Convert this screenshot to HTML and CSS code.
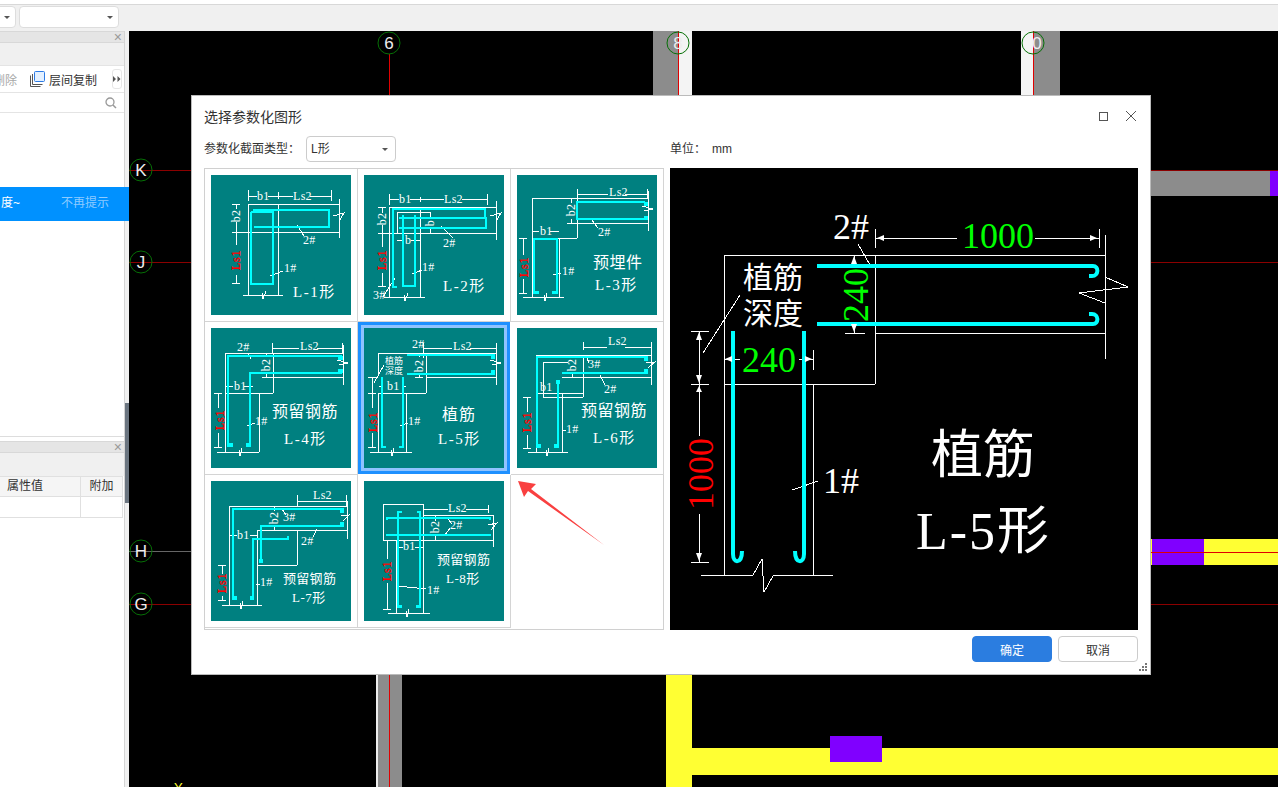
FILE: index.html
```html
<!DOCTYPE html>
<html lang="zh-CN">

<head>
  <meta charset="UTF-8" />
  <title>选择参数化图形</title>
  <link rel="stylesheet" href="styles.css">
</head>

<body>
  <div class="topbar">
    <div class="top-select first"><span class="caret"></span></div>
    <div class="top-select second"><span class="caret"></span></div>
  </div>

  <div class="main">
    <aside class="side">
      <div class="panel-head"><span class="close">×</span></div>
      <div class="panel-sub first-sub"></div>
      <div class="tools">
        <span class="tool-off">删除</span>
        <svg class="copy-icon" width="16" height="16" viewBox="0 0 16 16">
          <path d="M1.5 4.5v11h10M3.5 3v10.500h10" fill="none" stroke="#555" />
          <rect x="5.500" y="0.500" width="10" height="10" rx="1" fill="#e3f0ff" stroke="#2c7be5" />
        </svg>
        <span class="tool-on">层间复制</span>
        <span class="more">
          <svg width="8" height="6" viewBox="0 0 8 6"><path d="M0 0l3 3l-3 3zM4.500 0l3 3l-3 3z" fill="#555" /></svg>
        </span>
      </div>
      <div class="search">
        <svg width="12" height="12" viewBox="0 0 12 12">
          <circle cx="5" cy="5" r="4" fill="none" stroke="#999" stroke-width="1.300" />
          <path d="M8 8l3 3" stroke="#999" stroke-width="1.500" />
        </svg>
      </div>
      <div class="side-fill"></div>
      <div class="panel-head"><span class="close">×</span></div>
      <div class="panel-sub second-sub"></div>
      <div class="prop-table">
        <div class="prop-row prop-title"><span class="prop-name">属性值</span><span class="prop-add">附加</span></div>
        <div class="prop-row"><span class="prop-name"></span><span class="prop-add"></span></div>
      </div>
    </aside>

    <div class="splitter"><div class="splitter-grip"></div></div>

    <svg class="canvas" width="1149" height="756" viewBox="129 31 1149 756">
      <rect x="378" y="660" width="24" height="127" fill="#8c8c8c" />
      <rect x="376" y="660" width="2" height="127" fill="#eee" />
      <rect x="653" y="31" width="25" height="70" fill="#8c8c8c" />
      <rect x="678" y="31" width="14" height="70" fill="#f4f4f4" />
      <rect x="1021" y="31" width="12" height="70" fill="#f4f4f4" />
      <rect x="1033" y="31" width="27" height="70" fill="#8c8c8c" />
      <rect x="666" y="670" width="26" height="117" fill="#ffff33" />
      <rect x="692" y="748" width="586" height="27" fill="#ffff33" />
      <rect x="830" y="736" width="52" height="26" fill="#8000ff" />
      <rect x="1140" y="170" width="138" height="26" fill="#8c8c8c" />
      <rect x="1270" y="170" width="8" height="26" fill="#8000ff" />
      <rect x="1140" y="539" width="138" height="26" fill="#ffff33" />
      <rect x="1152" y="539" width="52" height="26" fill="#8000ff" />
      <path class="axis-red" d="M389.500 54V787M678.500 31V100M1033.500 31V100M1140 552.500H1278" />
      <path class="axis-dark" d="M129 170.500H200M1140 170.500H1278M129 262.500H200M1140 262.500H1278M129 604.500H200M1140 604.500H1278" />
      <path class="axis-grey" d="M129 551.500H200" />
      <circle class="axis-ring" cx="389" cy="43" r="11" />
      <circle class="axis-ring" cx="678" cy="43" r="11" />
      <circle class="axis-ring" cx="1033" cy="43" r="11" />
      <circle class="axis-ring" cx="141" cy="170" r="11" />
      <circle class="axis-ring" cx="141" cy="262" r="11" />
      <circle class="axis-ring" cx="141" cy="551" r="11" />
      <circle class="axis-ring" cx="141" cy="604" r="11" />
      <text class="axis-text" x="389" y="49">6</text>
      <text class="axis-text" x="678" y="49">8</text>
      <text class="axis-text" x="1037" y="49">0</text>
      <text class="axis-text" x="141" y="176">K</text>
      <text class="axis-text" x="141" y="268">J</text>
      <text class="axis-text" x="141" y="557">H</text>
      <text class="axis-text" x="141" y="610">G</text>
      <text class="axis-y" x="174" y="792">Y</text>
    </svg>
  </div>

  <div class="banner"><span class="banner-text">度~</span><span class="banner-link">不再提示</span></div>

  <div class="dialog">
    <div class="dialog-title">
      <span>选择参数化图形</span>
      <span class="win-btns">
        <svg width="11" height="11" viewBox="0 0 11 11"><rect x="1.500" y="1.500" width="8" height="8" fill="none" stroke="#555" /></svg>
        <svg width="12" height="12" viewBox="0 0 12 12"><path d="M1 1l10 10M11 1L1 11" stroke="#555" /></svg>
      </span>
    </div>

    <div class="dialog-body">
      <div class="left-col">
        <div class="type-row">
          <span class="type-label">参数化截面类型：</span>
          <div class="type-select">L形<span class="caret"></span></div>
        </div>
        <div class="shape-wrap">
          <div class="shape-grid">
            <div class="cell">
              <svg class="thumb" viewBox="0 0 140 140">
                <path class="ln" d="M37 15V26M67 17V24M120 15V26M37 21H46M57 21H82M99 21H120M37 29H128M37 29V120M67 29V120M22 57H128M128 24V63M32 120H72M25 29V34M25 47V70M25 100V108M21 29H29M21 57H29M21 108H29M122 41L133 38L128 46M51 118L52 124L55 116M86 50L93 61M59 101L72 96" />
                <path class="rb" d="M40 37V109H62V37H40M42 35H118V52H43" />
                <text class="t" x="46" y="25">b1</text><text class="t" x="82" y="25">Ls2</text>
                <text class="t" transform="rotate(-90 29 41)" x="29" y="41" text-anchor="middle">b2</text>
                <text class="t red" transform="rotate(-90 29 85)" x="29" y="85" text-anchor="middle">Ls1</text>
                <text class="t" x="92" y="69">2#</text><text class="t" x="73" y="97">1#</text>
                <text class="t big" x="82" y="122">L-1形</text>
              </svg>
            </div>
            <div class="cell">
              <svg class="thumb" viewBox="0 0 140 140">
                <path class="ln" d="M25 19V30M56 22V27M123 19V30M25 24H35M46 24H80M98 24H123M25 32H132M25 32V122M56 32V122M20 122H61M14 58H132M132 26V65M18 32V38M18 50V72M18 98V111M14 32H22M14 58H22M14 111H22M33 37V58M33 37H66M66 37V44M66 52V58M33 65H40M47 65H56M126 41L137 38L132 46M40 120L41 126L44 118M77 51L89 63M48 99L58 95M31 103L19 122" />
                <path class="rb" d="M33 112H29V34H121V42M39 40V111H51V40M35 43H122V53H35" />
                <text class="t" x="35" y="28">b1</text><text class="t" x="80" y="28">Ls2</text>
                <text class="t" transform="rotate(-90 22 44)" x="22" y="44" text-anchor="middle">b2</text>
                <text class="t red" transform="rotate(-90 22 85)" x="22" y="85" text-anchor="middle">Ls1</text>
                <text class="t" transform="rotate(-90 70 48)" x="70" y="48" text-anchor="middle">b</text>
                <text class="t" x="41" y="69">b</text>
                <text class="t" x="79" y="72">2#</text><text class="t" x="58" y="96">1#</text><text class="t" x="9" y="124">3#</text>
                <text class="t big" x="79" y="116">L-2形</text>
              </svg>
            </div>
            <div class="cell">
              <svg class="thumb" viewBox="0 0 140 140">
                <path class="ln" d="M60 14V24M130 14V24M60 19H91M108 19H130M15 23H131M15 23V122M15 63H60M60 23V63M42 63V122M6 122H47M51 48H131M131 16V56M15 56H22M33 56H42M54 23V28M54 44V48M50 23H58M50 48H58M6 63V80M6 104V118M2 63H10M2 118H10M125 31L136 34L127 36M27 120L28 126L30 118M74 44L81 53M36 100L44 98" />
                <path class="rb" d="M128 27H60V44H130M17 119V64H40V119" />
                <rect class="sq" x="127" y="27" width="4" height="4" /><rect class="sq" x="127" y="41" width="4" height="4" />
                <rect class="sq" x="17" y="116" width="5" height="3" /><rect class="sq" x="35" y="116" width="5" height="3" />
                <text class="t" x="23" y="60">b1</text><text class="t" x="92" y="21">Ls2</text>
                <text class="t" transform="rotate(-90 58 35)" x="58" y="35" text-anchor="middle">b2</text>
                <text class="t red" transform="rotate(-90 11 92)" x="11" y="92" text-anchor="middle">Ls1</text>
                <text class="t" x="81" y="61">2#</text><text class="t" x="45" y="100">1#</text>
                <text class="t cn" x="76" y="93">预埋件</text>
                <text class="t big" x="78" y="115">L-3形</text>
              </svg>
            </div>
            <div class="cell">
              <svg class="thumb" viewBox="0 0 140 140">
                <path class="ln" d="M61 15V25M131 15V25M61 20H88M106 20H131M14 25H132M14 25V124M14 65H62M62 25V65M48 65V124M6 124H48M52 49H132M132 17V57M14 58H22M33 58H42M55 25V29M55 45V49M51 25H59M51 49H59M7 65V80M7 105V119M3 65H11M3 119H11M126 32L137 35L128 37M28 122L29 128L31 120M37 25L40 31M36 98L44 95" />
                <path class="rb" d="M131 28H17V119M131 45H39V119" />
                <rect class="sq" x="127" y="28" width="5" height="4" /><rect class="sq" x="127" y="41" width="5" height="4" />
                <rect class="sq" x="17" y="115" width="5" height="4" /><rect class="sq" x="35" y="115" width="5" height="4" />
                <text class="t" x="23" y="62">b1</text><text class="t" x="89" y="22">Ls2</text><text class="t" x="26" y="23">2#</text>
                <text class="t" transform="rotate(-90 59 37)" x="59" y="37" text-anchor="middle">b2</text>
                <text class="t red" transform="rotate(-90 13 92)" x="13" y="92" text-anchor="middle">Ls1</text>
                <text class="t" x="44" y="97">1#</text>
                <text class="t cn" x="61" y="89">预留钢筋</text>
                <text class="t big" x="73" y="116">L-4形</text>
              </svg>
            </div>
            <div class="cell selected">
              <svg class="thumb" viewBox="0 0 140 140">
                <path class="ln" d="M59 15V25M132 15V25M59 20H88M106 20H132M14 25H132M14 25V47M14 65V124M14 65H62M62 25V65M42 65V124M6 124H48M62 49H132M132 17V57M15 58H18M39 58H42M55 25V29M55 45V49M51 25H59M51 49H59M8 49V80M8 105V119M4 49H12M4 65H12M4 119H12M126 32L137 35L128 37M27 122L28 128L30 120M57 25L60 30M36 98L44 95M20 37L10 55" />
                <path class="rb" d="M43 27H131M43 46H131M18 49V119H22M39 49V119H35" />
                <rect class="sq" x="127" y="27" width="4" height="4" /><rect class="sq" x="127" y="42" width="4" height="4" />
                <text class="t" x="23" y="62">b1</text><text class="t" x="89" y="22">Ls2</text><text class="t" x="48" y="20">2#</text>
                <text class="t" transform="rotate(-90 59 38)" x="59" y="38" text-anchor="middle">b2</text>
                <text class="t red" transform="rotate(-90 13 94)" x="13" y="94" text-anchor="middle">Ls1</text>
                <text class="t tiny" x="21" y="36">植筋</text><text class="t tiny" x="21" y="46">深度</text>
                <text class="t" x="44" y="97">1#</text>
                <text class="t cn2" x="78" y="92">植筋</text>
                <text class="t big" x="74" y="116">L-5形</text>
              </svg>
            </div>
            <div class="cell">
              <svg class="thumb" viewBox="0 0 140 140">
                <path class="ln" d="M66 14V22M134 14V22M66 19H90M108 19H134M19 27H135M19 27V124M19 65H66M66 27V69M26 69H66M26 34V69M26 34H51M45 65V124M11 124H51M45 49H135M134 16V57M55 27V30M55 44V49M10 69V84M10 107V120M6 69H14M6 120H14M129 35L138 34L131 40M29 122L30 128L32 120M70 30L72 35M83 47L88 57M45 103L49 102" />
                <path class="rb" d="M131 29H20V120M45 45H131M41 53V120" />
                <rect class="sq" x="127" y="29" width="4" height="4" /><rect class="sq" x="127" y="41" width="4" height="4" />
                <rect class="sq" x="20" y="116" width="4" height="4" /><rect class="sq" x="37" y="116" width="4" height="4" /><rect class="sq" x="39" y="52" width="4" height="4" />
                <text class="t" x="23" y="63">b1</text><text class="t" x="91" y="17">Ls2</text>
                <text class="t" transform="rotate(-90 59 37)" x="59" y="37" text-anchor="middle">b2</text>
                <text class="t red" transform="rotate(-90 14 94)" x="14" y="94" text-anchor="middle">Ls1</text>
                <text class="t" x="71" y="40">3#</text><text class="t" x="87" y="65">2#</text><text class="t" x="49" y="105">1#</text>
                <text class="t cn" x="64" y="88">预留钢筋</text>
                <text class="t big" x="76" y="115">L-6形</text>
              </svg>
            </div>
            <div class="cell">
              <svg class="thumb" viewBox="0 0 140 140">
                <path class="ln" d="M86 14V25M135 14V25M86 20H135M18 25H136M18 25V124M11 124H51M46 49V124M46 49H136M86 49V84M46 84H86M136 20V58M18 54H26M39 54H46M63 25V30M63 44V49M11 84V93M11 115V119M7 84H15M7 119H15M130 35L138 34L132 40M29 122L30 128L32 120M71 28L75 34M106 48L102 56M45 103L49 103" />
                <path class="rb" d="M133 28H22V119M133 45H50V81M77 55V58H42V119" />
                <rect class="sq" x="129" y="28" width="4" height="4" /><rect class="sq" x="129" y="41" width="4" height="4" />
                <rect class="sq" x="22" y="115" width="4" height="4" /><rect class="sq" x="39" y="115" width="4" height="4" /><rect class="sq" x="48" y="78" width="4" height="4" />
                <text class="t" x="26" y="58">b1</text><text class="t" x="102" y="18">Ls2</text>
                <text class="t" transform="rotate(-90 67 37)" x="67" y="37" text-anchor="middle">b2</text>
                <text class="t red" transform="rotate(-90 15 102)" x="15" y="102" text-anchor="middle">Ls1</text>
                <text class="t" x="72" y="40">3#</text><text class="t" x="90" y="64">2#</text><text class="t" x="49" y="105">1#</text>
                <text class="t cn3" x="72" y="102">预留钢筋</text>
                <text class="t big2" x="81" y="121">L-7形</text>
              </svg>
            </div>
            <div class="cell">
              <svg class="thumb" viewBox="0 0 140 140">
                <path class="ln" d="M19 23H59V59H19V23M59 34H129M59 59H129M129 34V66M59 28H84M102 28H124M124 24V32M32 59V132M59 59V132M24 132H66M32 66H39M51 66H59M71 34V40M71 54V59M23 59V78M23 102V128M19 59H27M19 128H27M124 44L133 42L127 49M42 130L43 136L45 128M84 38L88 43M81 54L86 47M34 105L62 108" />
                <path class="rb" d="M23 39V37H126V39M23 55V54H126V55M34 127V31H38M56 127V31H53" />
                <rect class="sq" x="34" y="124" width="4" height="3" /><rect class="sq" x="52" y="124" width="4" height="3" />
                <text class="t" x="39" y="69">b1</text><text class="t" x="84" y="31">Ls2</text>
                <text class="t" transform="rotate(-90 75 46)" x="75" y="46" text-anchor="middle">b2</text>
                <text class="t red" transform="rotate(-90 27 90)" x="27" y="90" text-anchor="middle">Ls1</text>
                <text class="t" x="86" y="48">2#</text><text class="t" x="63" y="113">1#</text>
                <text class="t cn3" x="73" y="83">预留钢筋</text>
                <text class="t big2" x="82" y="102">L-8形</text>
              </svg>
            </div>
            <div class="cell empty"></div>
          </div>
        </div>
      </div>

      <div class="right-col">
        <div class="unit-row"><span>单位：</span><span class="unit-value">mm</span></div>
        <svg class="preview" width="468" height="462" viewBox="0 0 468 462">
          <path class="ln" d="M54 87H435M54 87V407M54 216H205M205 87V216M205 165H435M435 67V191M435 109L458 119L409 125L435 135M143 182V202M143 216V407M31 407H83M103 407H163M83 407L92 391L94 424L103 408M205 61V80M429 61V80M205 70H287M365 70H429M54 191H70M129 191H143M184 88V97M184 155V165M175 165H195M21 163H39M21 216H39M21 394H39M29 163V216M29 216V268M29 346V394M188 76L200 97M70 127L33 185M122 322L148 313" />
          <path class="rb-big" d="M147 98H423C429 98 429 108 422 108H419M147 156H423C429 156 429 146 422 146H419M63 163V386C63 396 72 396 72 383M134 163V386C134 396 125 396 125 383" />
          <polygon class="ar" points="207,70 214,67 214,73" /><polygon class="ar" points="427,70 420,67 420,73" />
          <polygon class="ar" points="55,191 62,188 62,194" /><polygon class="ar" points="142,191 135,188 135,194" />
          <polygon class="ar" points="184,88 181,96 187,96" /><polygon class="ar" points="184,164 181,156 187,156" />
          <polygon class="ar" points="29,164 26,172 32,172" /><polygon class="ar" points="29,215 26,207 32,207" />
          <polygon class="ar" points="29,218 26,224 32,224" /><polygon class="ar" points="29,393 26,385 32,385" />
          <text class="p-num green" x="292" y="80">1000</text>
          <text class="p-num green" x="72" y="204">240</text>
          <text class="p-num green" transform="rotate(-90 198 127)" x="198" y="127" text-anchor="middle">240</text>
          <text class="p-num red-num" transform="rotate(-90 43 306)" x="43" y="306" text-anchor="middle">1000</text>
          <text class="p-num" x="163" y="71">2#</text>
          <text class="p-num" x="153" y="325">1#</text>
          <text class="p-cn" x="73" y="120">植筋</text>
          <text class="p-cn" x="73" y="156">深度</text>
          <text class="p-big" x="261" y="305">植筋</text>
          <text class="p-big wide" x="246" y="381">L-5形</text>
        </svg>
      </div>
    </div>

    <div class="dialog-foot">
      <button class="btn primary">确定</button>
      <button class="btn">取消</button>
    </div>

    <svg class="grip" width="8" height="8" viewBox="0 0 8 8">
      <path d="M6 0h2v2H6zM3 3h2v2H3zM6 3h2v2H6zM0 6h2v2H0zM3 6h2v2H3zM6 6h2v2H6z" fill="#777" />
    </svg>
  </div>

  <svg class="arrow" width="100" height="80" viewBox="510 475 100 80">
    <polygon points="518,481 536,484 531,489 604,545 528,491 524,497" fill="#f94040" />
  </svg>
</body>

</html>
```

FILE: styles.css
```css
* {
  box-sizing: border-box;
}

html,
body {
  margin: 0;
  height: 787px;
  overflow: hidden;
}

body {
  position: relative;
  width: 1278px;
  background: #f0f0f0;
  color: #333;
  font-family: "Liberation Sans", "Noto Sans CJK SC", sans-serif;
  font-size: 12px;
}

/* top toolbar */
.topbar {
  display: flex;
  gap: 3px;
  height: 31px;
  margin-left: -10px;
  padding-top: 2px;
  background: #f0f0f0;
  border-top: 4px solid #fff;
  box-shadow: inset 0 1px 0 #d8d8d8;
}

.top-select {
  position: relative;
  height: 22px;
  background: #fff;
  border: 1px solid #ddd;
  border-radius: 4px;
}

.top-select.first {
  width: 26px;
}

.top-select.second {
  width: 100px;
}

.caret {
  position: absolute;
  right: 5px;
  top: 9px;
  border-left: 3px solid transparent;
  border-right: 3px solid transparent;
  border-top: 3px solid #555;
}

.main {
  display: flex;
  height: 756px;
}

/* left panels */
.side {
  display: flex;
  flex-direction: column;
  width: 125px;
  background: #fff;
  border-right: 1px solid #d4d4d4;
}

.panel-head {
  position: relative;
  height: 12px;
  background: #e5e5e5;
  border-top: 1px solid #d8d8d8;
  border-bottom: 1px solid #d8d8d8;
  flex: none;
}

.close {
  position: absolute;
  right: 2px;
  top: -3px;
  color: #999;
  font-size: 14px;
  line-height: 16px;
}

.panel-sub {
  background: #f0f0f0;
  flex: none;
}

.first-sub {
  height: 22px;
}

.second-sub {
  height: 23px;
}

.tools {
  display: flex;
  align-items: center;
  height: 28px;
  background: #fff;
  border-top: 1px solid #e4e4e4;
  border-bottom: 1px solid #e4e4e4;
  padding-right: 2px;
  flex: none;
}

.tool-off {
  margin-left: -7px;
  color: #a8a8a8;
}

.copy-icon {
  margin-left: 12px;
}

.tool-on {
  margin-left: 4px;
  white-space: nowrap;
}

.more {
  display: flex;
  align-items: center;
  justify-content: center;
  margin-left: auto;
  width: 10px;
  height: 20px;
  border: 1px solid #e6e6e6;
  border-radius: 3px;
}

.search {
  display: flex;
  align-items: center;
  justify-content: flex-end;
  height: 20px;
  padding-right: 7px;
  border-bottom: 1px solid #e4e4e4;
  flex: none;
}

.side-fill {
  flex: 1;
  background: linear-gradient(#fff 323px, #ddd 323px, #ddd 324px, #fff 324px);
}

.prop-table {
  height: 311px;
  background: #fff;
  flex: none;
}

.prop-row {
  display: flex;
  width: 123px;
  height: 21px;
  border-bottom: 1px solid #e0e0e0;
  border-right: 1px solid #e0e0e0;
}

.prop-title {
  background: #f5f5f5;
  border-top: 1px solid #e0e0e0;
  line-height: 19px;
}

.prop-name {
  width: 81px;
  padding-left: 7px;
  border-right: 1px solid #e0e0e0;
}

.prop-add {
  flex: 1;
  text-align: center;
}

.splitter {
  position: relative;
  width: 4px;
  background: #f0f0f0;
}

.splitter-grip {
  position: absolute;
  top: 372px;
  left: 0;
  width: 4px;
  height: 100px;
  background: #6b7580;
}

/* drawing area */
.canvas {
  display: block;
  background: #000;
}

.axis-red {
  stroke: #e00000;
  fill: none;
}

.axis-dark {
  stroke: #8b0000;
  fill: none;
}

.axis-grey {
  stroke: #666;
  fill: none;
}

.axis-ring {
  fill: none;
  stroke: #067006;
}

.axis-text {
  fill: #eee;
  font-size: 17px;
  text-anchor: middle;
}

.axis-y {
  fill: #ffff33;
  font-size: 13px;
}

.banner {
  position: absolute;
  left: 0;
  top: 187px;
  display: flex;
  width: 129px;
  height: 34px;
  background: #0091ff;
  line-height: 33px;
}

.banner-text {
  padding-left: 1px;
  color: #fff;
}

.banner-link {
  margin-left: 41px;
  color: #8ecbff;
}

/* dialog */
.dialog {
  position: absolute;
  left: 192px;
  top: 96px;
  width: 958px;
  height: 578px;
  background: #fff;
  box-shadow: 0 0 0 1px #bbb;
}

.dialog-title {
  display: flex;
  justify-content: space-between;
  align-items: center;
  height: 40px;
  padding: 0 13px 0 12px;
  font-size: 14px;
}

.win-btns {
  display: flex;
  align-items: center;
  gap: 16px;
}

.dialog-body {
  display: flex;
  gap: 6px;
  padding-left: 12px;
  padding-right: 12px;
}

.left-col {
  width: 460px;
}

.type-row {
  display: flex;
  align-items: flex-start;
  height: 32px;
  line-height: 26px;
}

.type-label {
  width: 102px;
}

.type-select {
  position: relative;
  width: 90px;
  height: 26px;
  padding-left: 4px;
  border: 1px solid #ccc;
  border-radius: 4px;
  line-height: 24px;
}

.type-select .caret {
  right: 7px;
  top: 11px;
}

.shape-wrap {
  width: 460px;
  height: 462px;
  border: 1px solid #d0d0d0;
  padding-right: 1px;
  padding-bottom: 2px;
}

.shape-grid {
  display: grid;
  grid-template-columns: repeat(3, 153px);
  grid-template-rows: repeat(3, 153px);
}

.cell {
  padding: 6px;
  border-right: 1px solid #d4d4d4;
  border-bottom: 1px solid #d4d4d4;
}

.cell.selected {
  width: 152px;
  height: 152px;
  border: 0;
  box-shadow: inset 0 0 0 3px #1e90ff, inset 0 0 0 6px #8fc3ff;
}

.cell.empty {
  border-right: 0;
  border-bottom: 0;
}

.thumb {
  display: block;
  width: 140px;
  height: 140px;
  background: #008080;
}

.ln {
  fill: none;
  stroke: #fff;
  stroke-width: 1;
  shape-rendering: crispEdges;
}

.rb {
  fill: none;
  stroke: #0ff;
  stroke-width: 2.500;
  shape-rendering: crispEdges;
}

.rb-big {
  fill: none;
  stroke: #0ff;
  stroke-width: 4;
}

.sq {
  fill: #0ff;
}

.ar {
  fill: #fff;
}

.t {
  fill: #fff;
  font-family: "Liberation Serif", "Noto Sans CJK SC", serif;
  font-size: 12px;
  letter-spacing: 0.300px;
}

.t.red {
  fill: #f00;
  stroke: #f00;
  stroke-width: 0.400;
  letter-spacing: 0.800px;
}

.t.big {
  font-size: 15px;
  letter-spacing: 1.500px;
}

.t.big2 {
  font-size: 13px;
  letter-spacing: 0.500px;
}

.t.cn {
  font-size: 16px;
  letter-spacing: 0.500px;
}

.t.cn2 {
  font-size: 16px;
  letter-spacing: 1px;
}

.t.cn3 {
  font-size: 13px;
}

.t.tiny {
  font-size: 9px;
  letter-spacing: 0;
}

.right-col {
  width: 468px;
}

.unit-row {
  display: flex;
  align-items: flex-start;
  height: 32px;
  line-height: 26px;
}

.unit-value {
  margin-left: 6px;
}

.preview {
  display: block;
  background: #000;
}

.p-num {
  fill: #fff;
  font-family: "Liberation Serif", serif;
  font-size: 36px;
}

.p-num.green {
  fill: #0f0;
}

.p-num.red-num {
  fill: #f00;
}

.p-cn {
  fill: #fff;
  font-family: "Noto Sans CJK SC", sans-serif;
  font-size: 30px;
}

.p-big {
  fill: #fff;
  font-family: "Liberation Serif", "Noto Sans CJK SC", serif;
  font-size: 52px;
}

.p-big.wide {
  letter-spacing: 2px;
}

.dialog-foot {
  display: flex;
  justify-content: flex-end;
  gap: 6px;
  margin-top: 6px;
  padding-right: 12px;
}

.btn {
  width: 80px;
  height: 26px;
  padding: 0;
  background: #fff;
  border: 1px solid #ccc;
  border-radius: 4px;
  color: #333;
  font: inherit;
}

.btn.primary {
  background: #2b7de0;
  border-color: #2b7de0;
  color: #fff;
}

.grip {
  position: absolute;
  right: 3px;
  bottom: 3px;
}

.arrow {
  position: absolute;
  left: 510px;
  top: 475px;
}
```
